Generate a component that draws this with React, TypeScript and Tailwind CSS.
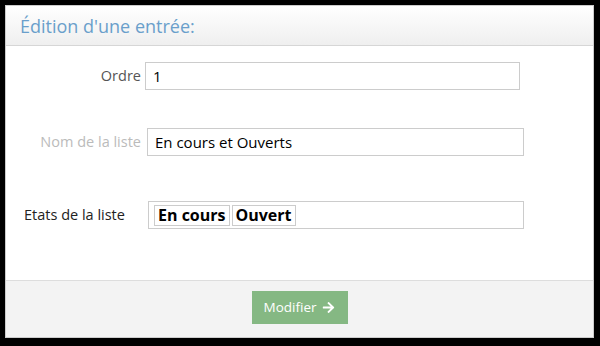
import React from "react";
import { FaArrowRight } from "react-icons/fa";

export default function App() {
  const font = { fontFamily: '"Open Sans", "Noto Sans", sans-serif' };
  return (
    <div className="w-[600px] h-[346px] bg-black pt-[5px] pl-[5px]" style={font}>
      <div className="w-[589px] h-[333px] border border-[#cccccc] bg-white flex flex-col">
        <div className="h-[40px] border-b border-[#d6d6d6] bg-gradient-to-b from-white to-[#efefef] flex items-center pl-[14px]">
          <span className="text-[18px] text-[#6a9fcb] leading-none">Édition d'une entrée:</span>
        </div>
        <div className="flex-1 flex flex-col pt-[16px]">
          <div className="flex items-center">
            <label className="w-[135px] text-right text-[14.5px] text-[#555555]">Ordre</label>
            <div className="ml-[4px] w-[375px] h-[28px] border border-[#cccccc] flex items-center pl-[7px] text-[15px] text-black">
              1
            </div>
          </div>
          <div className="flex items-center mt-[38px]">
            <label className="w-[135px] text-right text-[14.5px] text-[#bbbbbb]">Nom de la liste</label>
            <div className="ml-[6px] w-[377px] h-[28px] border border-[#cccccc] flex items-center pl-[7px] text-[15px] text-black">
              En cours et Ouverts
            </div>
          </div>
          <div className="flex items-center mt-[45px]">
            <label className="w-[142px] pl-[18px] text-[14.5px] text-[#222222]">Etats de la liste</label>
            <div className="w-[376px] h-[28px] border border-[#cccccc] flex items-center pl-[5px] gap-[2px]">
              <span className="border border-[#cccccc] h-[21px] px-[3px] flex items-center text-[16px] font-bold text-black leading-none">
                En cours
              </span>
              <span className="border border-[#cccccc] h-[21px] px-[3px] flex items-center text-[16px] font-bold text-black leading-none">
                Ouvert
              </span>
            </div>
          </div>
        </div>
        <div className="h-[57px] border-t border-[#dddddd] bg-[#f3f3f3] flex justify-center pt-[10px]">
          <button className="w-[96px] h-[33px] bg-[#85b883] text-white text-[13.5px] flex items-center justify-center gap-[6px]">
            <span>Modifier</span>
            <FaArrowRight className="w-[13px] h-[13px]" />
          </button>
        </div>
      </div>
    </div>
  );
}
